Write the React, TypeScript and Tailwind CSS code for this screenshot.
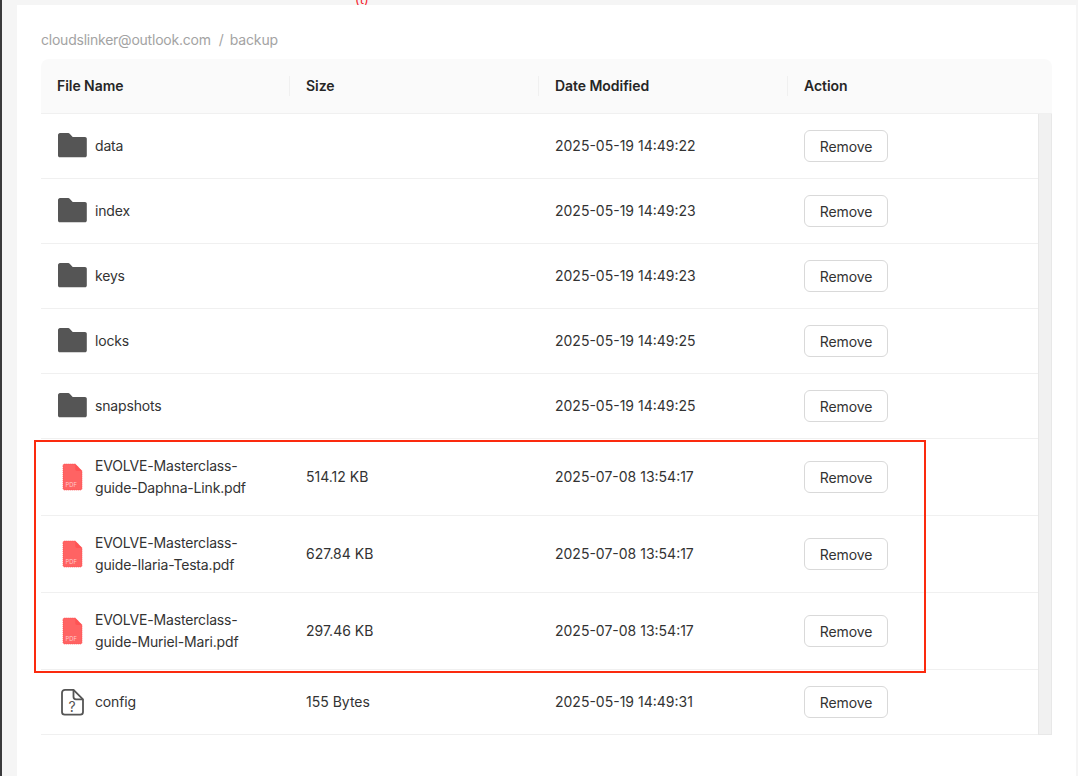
const FONT = "font-['Inter','Liberation_Sans',sans-serif]";

function FolderIcon() {
  return (
    <svg width="30" height="26" viewBox="0 0 30 26" className="shrink-0">
      <path d="M1 2.200C1 1 1.900 0 3 0h8.200c.6 0 1.100.2 1.500.7l3 3.300h12.300c1 0 1.800.8 1.800 1.800v16.600c0 1-.8 1.800-1.800 1.800H2.800C1.800 24.200 1 23.400 1 22.400z" fill="#555555" />
    </svg>
  );
}

function PdfIcon() {
  return (
    <svg width="30" height="30" viewBox="0 0 30 30" className="shrink-0">
      <path d="M6 3.500C6 2.700 6.700 2 7.500 2h10.800L25 8.900V26.500c0 .8-.7 1.500-1.500 1.500h-16C6.700 28 6 27.300 6 26.500z" fill="#ff6363" stroke="#ff4d4f" strokeWidth="0.8" strokeDasharray="1 1" />
      <path d="M18.300 2v5.200c0 .9.700 1.700 1.700 1.700h5z" fill="#ff4d4f" opacity="0.75" />
      <text x="8.500" y="24.500" fontSize="5.800" fill="#ffc9c9" fontFamily="Inter, sans-serif">PDF</text>
    </svg>
  );
}

function UnknownIcon() {
  return (
    <svg width="30" height="30" viewBox="0 0 30 30" fill="none" stroke="#555555" strokeWidth="1.800" className="shrink-0">
      <path d="M8 2.800h8.500L26 12.300V25c0 1.500-1.100 2.700-2.700 2.700H7.700C6.100 27.700 5 26.500 5 25V5.800c0-1.700 1.300-3 3-3z" strokeLinejoin="round" />
      <path d="M16.500 2.800v7c0 1.400 1 2.500 2.500 2.500h7" strokeLinejoin="round" />
      <text x="15" y="25" fontSize="14" textAnchor="middle" fill="#555555" stroke="none" fontFamily="Inter, sans-serif">?</text>
    </svg>
  );
}

type Row = {
  kind: "folder" | "pdf" | "unknown";
  name: string[];
  size?: string;
  date: string;
};

const rows: Row[] = [
  { kind: "folder", name: ["data"], date: "2025-05-19 14:49:22" },
  { kind: "folder", name: ["index"], date: "2025-05-19 14:49:23" },
  { kind: "folder", name: ["keys"], date: "2025-05-19 14:49:23" },
  { kind: "folder", name: ["locks"], date: "2025-05-19 14:49:25" },
  { kind: "folder", name: ["snapshots"], date: "2025-05-19 14:49:25" },
  { kind: "pdf", name: ["EVOLVE-Masterclass-", "guide-Daphna-Link.pdf"], size: "514.12 KB", date: "2025-07-08 13:54:17" },
  { kind: "pdf", name: ["EVOLVE-Masterclass-", "guide-Ilaria-Testa.pdf"], size: "627.84 KB", date: "2025-07-08 13:54:17" },
  { kind: "pdf", name: ["EVOLVE-Masterclass-", "guide-Muriel-Mari.pdf"], size: "297.46 KB", date: "2025-07-08 13:54:17" },
  { kind: "unknown", name: ["config"], size: "155 Bytes", date: "2025-05-19 14:49:31" },
];

function HeaderCell({ label, sep }: { label: string; sep: boolean }) {
  return (
    <div className="relative flex items-center px-4 text-sm font-semibold tracking-[-0.05px] text-[#262626]">
      {label}
      {sep && <span className="absolute right-0 top-[17px] h-[20px] w-px bg-[#f0f0f0]" />}
    </div>
  );
}

export default function App() {
  return (
    <div className={`${FONT} relative h-[776px] w-[1078px] overflow-hidden bg-[#f5f5f5] pl-[2px]`}>
      <div className="absolute left-0 top-0 h-full w-[2px] bg-[#3a3a3c]" />
      <div className="absolute left-[355px] top-[-9px] text-[13px] leading-4 text-[#f5222d]">(t)</div>

      <div className="relative ml-[15px] mr-[2px] mt-[5px] h-[771px] bg-white pl-[24px] pr-[24px] pt-[26px]">
        <div className="flex h-[18px] items-center text-sm leading-[18px] text-[#a3a3a3]">
          <span className="tracking-[-0.23px]">cloudslinker@outlook.com</span>
          <span className="ml-2 mr-[6px]">/</span>
          <span className="tracking-[-0.15px]">backup</span>
        </div>

        <div className="mt-[10px]">
          <div className="grid h-[55px] grid-cols-[249px_249px_249px_264px] rounded-t-lg border-b border-[#f0f0f0] bg-[#fafafa]">
            <HeaderCell label="File Name" sep />
            <HeaderCell label="Size" sep />
            <HeaderCell label="Date Modified" sep />
            <HeaderCell label="Action" sep={false} />
          </div>

          <div className="flex">
            <div className="w-[997px]">
              {rows.map((r, i) => (
                <div
                  key={i}
                  className={`grid grid-cols-[249px_249px_249px_250px] border-b border-[#f0f0f0] text-sm text-[#333333] ${r.kind === "pdf" ? "h-[77px]" : "h-[65px]"}`}
                >
                  <div className="flex items-center gap-2 pl-4">
                    {r.kind === "folder" && <FolderIcon />}
                    {r.kind === "pdf" && <PdfIcon />}
                    {r.kind === "unknown" && <UnknownIcon />}
                    <div className="leading-[22px] tracking-[-0.17px]">
                      {r.name.map((n) => (
                        <div key={n}>{n}</div>
                      ))}
                    </div>
                  </div>
                  <div className="flex items-center pl-4">{r.size}</div>
                  <div className="flex items-center pl-4">{r.date}</div>
                  <div className="flex items-center pl-4">
                    <button className="h-8 w-[84px] rounded-md border border-[#d9d9d9] bg-white pt-[2px] text-sm tracking-[-0.1px] text-[#333333]">
                      Remove
                    </button>
                  </div>
                </div>
              ))}
            </div>
            <div className="w-[14px] border-x border-b border-[#e8e8e8] bg-[#f1f1f1]" />
          </div>
        </div>
      </div>

      <div className="pointer-events-none absolute left-[34px] top-[440px] h-[233px] w-[892px] border-2 border-[#fb2a0e]" />
    </div>
  );
}
